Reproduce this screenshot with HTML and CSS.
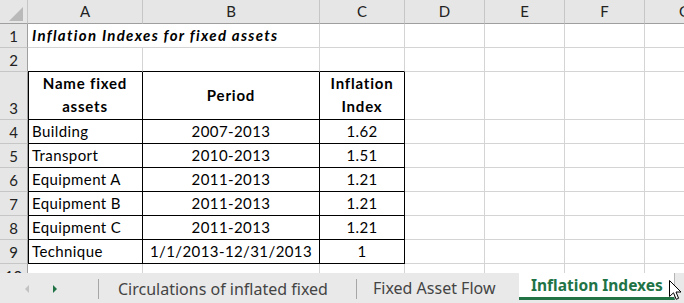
FILE: index.html
```html
<!DOCTYPE html>
<html lang="en">
<head>
  <meta charset="UTF-8">
  <title>Inflation Indexes</title>
  <link rel="stylesheet" href="styles.css">
</head>
<body>

  <div class="sheet">
    <table class="grid">
      <colgroup>
        <col class="w-rn">
        <col class="w-a">
        <col class="w-b">
        <col class="w-c">
        <col class="w-n">
        <col class="w-n">
        <col class="w-n">
        <col class="w-n">
      </colgroup>
      <thead>
        <tr class="head">
          <th class="corner"><span class="tri"></span></th>
          <th>A</th>
          <th>B</th>
          <th>C</th>
          <th>D</th>
          <th>E</th>
          <th>F</th>
          <th>G</th>
        </tr>
      </thead>
      <tbody>
        <tr>
          <th class="rn">1</th>
          <td class="title" colspan="2">Inflation Indexes for fixed assets</td>
          <td></td><td></td><td></td><td></td><td></td>
        </tr>
        <tr>
          <th class="rn">2</th>
          <td class="top"></td><td class="top"></td><td class="top"></td>
          <td></td><td></td><td></td><td></td>
        </tr>
        <tr class="tall">
          <th class="rn">3</th>
          <td class="box first hd">Name fixed<br>assets</td>
          <td class="box hd mid">Period</td>
          <td class="box hd">Inflation<br>Index</td>
          <td></td><td></td><td></td><td></td>
        </tr>
        <tr>
          <th class="rn">4</th>
          <td class="box first">Building</td>
          <td class="box ctr">2007-2013</td>
          <td class="box ctr">1.62</td>
          <td></td><td></td><td></td><td></td>
        </tr>
        <tr>
          <th class="rn">5</th>
          <td class="box first">Transport</td>
          <td class="box ctr">2010-2013</td>
          <td class="box ctr">1.51</td>
          <td></td><td></td><td></td><td></td>
        </tr>
        <tr>
          <th class="rn">6</th>
          <td class="box first">Equipment A</td>
          <td class="box ctr">2011-2013</td>
          <td class="box ctr">1.21</td>
          <td></td><td></td><td></td><td></td>
        </tr>
        <tr>
          <th class="rn">7</th>
          <td class="box first">Equipment B</td>
          <td class="box ctr">2011-2013</td>
          <td class="box ctr">1.21</td>
          <td></td><td></td><td></td><td></td>
        </tr>
        <tr>
          <th class="rn">8</th>
          <td class="box first">Equipment C</td>
          <td class="box ctr">2011-2013</td>
          <td class="box ctr">1.21</td>
          <td></td><td></td><td></td><td></td>
        </tr>
        <tr>
          <th class="rn">9</th>
          <td class="box first">Technique</td>
          <td class="box ctr">1/1/2013-12/31/2013</td>
          <td class="box ctr">1</td>
          <td></td><td></td><td></td><td></td>
        </tr>
        <tr>
          <th class="rn">10</th>
          <td></td><td></td><td></td><td></td><td></td><td></td><td></td>
        </tr>
      </tbody>
    </table>
  </div>

  <div class="tabbar">
    <div class="nav">
      <span class="arrow left"></span>
      <span class="arrow right"></span>
    </div>
    <div class="tab t1">Circulations of inflated fixed</div>
    <div class="tab t2">Fixed Asset Flow</div>
    <div class="tab active">Inflation Indexes</div>
    <svg class="cursor" width="13" height="21" viewBox="0 0 13 21">
      <path d="M0.5 0.5 L0.5 16.5 L4.5 12.8 L7.2 19.3 L9.6 18.3 L7 12 L12 12 Z" fill="#fff" stroke="#000" stroke-width="1"/>
    </svg>
  </div>

</body>
</html>
```

FILE: styles.css
```css
body {
  margin: 0;
  width: 684px;
  height: 303px;
  overflow: hidden;
  background: #fff;
  font-family: "Lato", "Liberation Sans", sans-serif;
  color: #000;
}
.sheet {
  height: 273px;
  overflow: hidden;
}
.grid {
  border-collapse: separate;
  border-spacing: 0;
  table-layout: fixed;
  width: 725px;
  font-size: 15px;
}
.w-rn { width: 28px; }
.w-a { width: 115px; }
.w-b { width: 177px; }
.w-c { width: 85px; }
.w-n { width: 80px; }
.grid tr {
  height: 24px;
}
.grid tr.tall {
  height: 46px;
}
.grid td, .grid th {
  padding: 0 4px 1px;
  border-right: 1px solid #d4d4d4;
  border-bottom: 1px solid #d4d4d4;
  vertical-align: bottom;
  line-height: 21px;
  white-space: nowrap;
  overflow: hidden;
}
.grid td {
  letter-spacing: 0.4px;
}
.grid th {
  background: #e6e6e6;
  font-weight: normal;
  color: #222;
  text-align: center;
  padding: 0;
}
.head th {
  vertical-align: middle;
  border-right: 1px solid #c6c6c6;
  border-bottom: 1px solid #9f9f9f;
  font-size: 15px;
}
.grid th.rn {
  border-right: 1px solid #9f9f9f;
  border-bottom: 1px solid #c6c6c6;
  font-size: 15px;
}
.corner {
  position: relative;
}
.tri {
  position: absolute;
  right: 4px;
  bottom: 2px;
  width: 0;
  height: 0;
  border-left: 14px solid transparent;
  border-bottom: 14px solid #b9b9b9;
}
.grid td.title {
  font-weight: bold;
  font-style: italic;
  letter-spacing: 1.3px;
}
.grid td.top {
  border-bottom: 1px solid #000;
}
.grid td.box {
  border-right: 1px solid #000;
  border-bottom: 1px solid #000;
}
.grid td.first {
  box-shadow: inset 1px 0 0 #000;
}
.grid td.hd {
  font-weight: bold;
  text-align: center;
  line-height: 23px;
  letter-spacing: 0.8px;
  white-space: normal;
}
.grid td.mid {
  vertical-align: middle;
}
.grid td.ctr {
  text-align: center;
}

.tabbar {
  height: 30px;
  background: #e9e9e9;
  display: flex;
  align-items: stretch;
  position: relative;
  font-family: "Noto Sans", "Open Sans", sans-serif;
  font-size: 16px;
  color: #444;
}
.nav {
  width: 99px;
  display: flex;
  align-items: center;
  padding-left: 25px;
  gap: 24px;
  box-sizing: border-box;
  border-right: 1px solid #a6a6a6;
  margin: 6px 0 4px;
}
.arrow {
  width: 0;
  height: 0;
  border-top: 4px solid transparent;
  border-bottom: 4px solid transparent;
}
.arrow.left {
  border-right: 4px solid #c2c2c2;
}
.arrow.right {
  border-left: 4px solid #217346;
}
.tab {
  display: flex;
  align-items: center;
  box-sizing: border-box;
  white-space: nowrap;
  overflow: hidden;
}
.t1 {
  width: 258px;
  padding-left: 19px;
  border-right: 1px solid #a6a6a6;
  margin: 6px 0 4px;
}
.t2 {
  width: 162px;
  padding-left: 16px;
}
.active {
  width: 156px;
  padding-left: 12px;
  background: #fff;
  color: #217346;
  font-weight: bold;
  font-size: 15.5px;
  border-bottom: 3px solid #217346;
  border-right: 1px solid #b5b5b5;
  margin-bottom: 3px;
}
.cursor {
  position: absolute;
  left: 669px;
  top: 7px;
}
```
